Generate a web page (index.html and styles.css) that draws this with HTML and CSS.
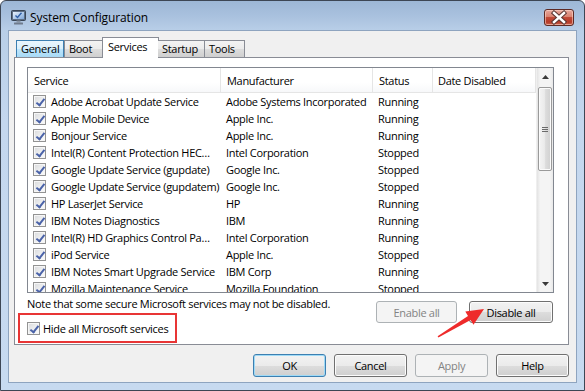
FILE: index.html
```html
<!DOCTYPE html>
<html>
<head>
<meta charset="utf-8">
<link rel="stylesheet" href="styles.css">
</head>
<body>
<div class="window">
  <div class="titlebar">
    <svg class="app-icon" width="15" height="15" viewBox="0 0 15 15">
      <defs>
        <linearGradient id="scr" x1="0" y1="0" x2="1" y2="1">
          <stop offset="0" stop-color="#e8f2fc"/>
          <stop offset="1" stop-color="#7fa7d8"/>
        </linearGradient>
      </defs>
      <rect x="0.5" y="0.5" width="14" height="10" rx="1" fill="#5d6f86" stroke="#3a4656"/>
      <rect x="2" y="2" width="11" height="7" fill="url(#scr)"/>
      <path d="M4.5 5.5 L6.5 7.5 L10.5 2.8" fill="none" stroke="#2f5fa8" stroke-width="1.4"/>
      <rect x="5.5" y="10.5" width="4" height="2" fill="#8a96a6"/>
      <rect x="3" y="12.5" width="9" height="2" rx="0.5" fill="#6f7b8c"/>
    </svg>
    <span class="title">System Configuration</span>
    <div class="close">
      <svg width="30" height="17" viewBox="0 0 30 17">
        <path d="M10 4 L20 13 M20 4 L10 13" stroke="#5a3632" stroke-width="4.4" stroke-linecap="square"/>
        <path d="M10 4 L20 13 M20 4 L10 13" stroke="#ffffff" stroke-width="2.4" stroke-linecap="square"/>
      </svg>
    </div>
  </div>

  <div class="client">
    <div class="tabs">
      <div class="tab tab-general hot">General</div>
      <div class="tab tab-boot">Boot</div>
      <div class="tab tab-services active">Services</div>
      <div class="tab tab-startup">Startup</div>
      <div class="tab tab-tools">Tools</div>
    </div>

    <div class="panel">
      <div class="list">
        <div class="list-main">
          <div class="header">
            <div class="hcell">Service</div>
            <div class="hcell">Manufacturer</div>
            <div class="hcell">Status</div>
            <div class="hcell">Date Disabled</div>
          </div>
          <div class="rows">
            <div class="row"><div class="cell first"><span class="cb"></span>Adobe Acrobat Update Service</div><div class="cell">Adobe Systems Incorporated</div><div class="cell">Running</div><div class="cell"></div></div>
            <div class="row"><div class="cell first"><span class="cb"></span>Apple Mobile Device</div><div class="cell">Apple Inc.</div><div class="cell">Running</div><div class="cell"></div></div>
            <div class="row"><div class="cell first"><span class="cb"></span>Bonjour Service</div><div class="cell">Apple Inc.</div><div class="cell">Running</div><div class="cell"></div></div>
            <div class="row"><div class="cell first"><span class="cb"></span>Intel(R) Content Protection HEC…</div><div class="cell">Intel Corporation</div><div class="cell">Stopped</div><div class="cell"></div></div>
            <div class="row"><div class="cell first"><span class="cb"></span>Google Update Service (gupdate)</div><div class="cell">Google Inc.</div><div class="cell">Stopped</div><div class="cell"></div></div>
            <div class="row"><div class="cell first"><span class="cb"></span>Google Update Service (gupdatem)</div><div class="cell">Google Inc.</div><div class="cell">Stopped</div><div class="cell"></div></div>
            <div class="row"><div class="cell first"><span class="cb"></span>HP LaserJet Service</div><div class="cell">HP</div><div class="cell">Running</div><div class="cell"></div></div>
            <div class="row"><div class="cell first"><span class="cb"></span>IBM Notes Diagnostics</div><div class="cell">IBM</div><div class="cell">Running</div><div class="cell"></div></div>
            <div class="row"><div class="cell first"><span class="cb"></span>Intel(R) HD Graphics Control Pa…</div><div class="cell">Intel Corporation</div><div class="cell">Running</div><div class="cell"></div></div>
            <div class="row"><div class="cell first"><span class="cb"></span>iPod Service</div><div class="cell">Apple Inc.</div><div class="cell">Stopped</div><div class="cell"></div></div>
            <div class="row"><div class="cell first"><span class="cb"></span>IBM Notes Smart Upgrade Service</div><div class="cell">IBM Corp</div><div class="cell">Running</div><div class="cell"></div></div>
            <div class="row"><div class="cell first"><span class="cb"></span>Mozilla Maintenance Service</div><div class="cell">Mozilla Foundation</div><div class="cell">Stopped</div><div class="cell"></div></div>
          </div>
        </div>
        <div class="scrollbar">
          <div class="sb-btn"><svg width="7" height="4" viewBox="0 0 7 4"><path d="M0 4 L3.5 0 L7 4 Z" fill="#3a3a3a"/></svg></div>
          <div class="sb-track">
            <div class="sb-thumb"><span class="grip"></span></div>
          </div>
          <div class="sb-btn"><svg width="7" height="4" viewBox="0 0 7 4"><path d="M0 0 L7 0 L3.5 4 Z" fill="#3a3a3a"/></svg></div>
        </div>
      </div>

      <div class="below">
        <div class="below-left">
          <div class="note">Note that some secure Microsoft services may not be disabled.</div>
          <div class="hide-row"><span class="cb"></span>Hide all Microsoft services</div>
        </div>
        <div class="actions">
          <div class="btn disabled btn-enable">Enable all</div>
          <div class="btn btn-disable">Disable all</div>
        </div>
      </div>
    </div>

    <div class="footer">
      <div class="btn default">OK</div>
      <div class="btn">Cancel</div>
      <div class="btn disabled">Apply</div>
      <div class="btn">Help</div>
    </div>
  </div>

  <svg class="arrow" width="585" height="391" viewBox="0 0 585 391">
    <polygon points="484,309 473.5,324.8 470.6,320.1 438.4,337.6 437.6,336.2 468.0,315.9 465.3,311.6" fill="#ee2b2b"/>
  </svg>
</div>
</body>
</html>
```

FILE: styles.css
```css
* { box-sizing: border-box; }

html, body {
  margin: 0;
  padding: 0;
  background: #ffffff;
}

body {
  font-family: "Open Sans", "Noto Sans", sans-serif;
  font-size: 11px;
  letter-spacing: -0.3px;
  color: #000;
}

.window {
  position: relative;
  width: 585px;
  height: 391px;
  border: 1px solid #3d4654;
  border-radius: 6px 6px 0 0;
  background: linear-gradient(to bottom, #9db7d6 0px, #a9c1de 15px, #b9cfe8 30px, #c4d7ee 120px, #c7daf0 391px);
  padding: 0 7px 7px 7px;
  display: flex;
  flex-direction: column;
  overflow: hidden;
}

.titlebar {
  height: 29px;
  display: flex;
  align-items: center;
  padding-top: 3px;
}

.app-icon {
  margin-left: 3px;
  flex: none;
}

.title {
  margin-left: 4px;
  font-size: 12px;
  letter-spacing: -0.1px;
  color: #000;
  flex: 1;
}

.close {
  width: 30px;
  height: 17px;
  margin-right: 3px;
  border: 1px solid #5e2a24;
  border-radius: 3px;
  background: linear-gradient(to bottom, #e7a79c 0%, #d98270 45%, #c14a38 50%, #b63b29 80%, #c8624c 100%);
  box-shadow: inset 0 0 0 1px rgba(255, 220, 210, 0.55);
  display: flex;
  align-items: center;
  justify-content: center;
  overflow: hidden;
}

.close svg { display: block; margin: -1px; }

.client {
  flex: 1;
  background: #f0f0f0;
  border: 1px solid #8ea4bf;
  padding: 6px 7px 0 5px;
  display: flex;
  flex-direction: column;
}

/* Tabs */
.tabs {
  height: 20px;
  display: flex;
  align-items: flex-end;
  padding-left: 2px;
  position: relative;
  z-index: 2;
}

.tab {
  height: 17px;
  border: 1px solid #898c95;
  border-bottom: none;
  border-right: none;
  background: linear-gradient(to bottom, #f3f3f3 0%, #ebebeb 50%, #dddddd 51%, #cfcfcf 100%);
  padding-left: 4px;
  line-height: 15px;
  white-space: nowrap;
}

.tab-general { width: 48px; }
.tab-boot { width: 40px; border-right: 1px solid #898c95; }
.tab-services { width: 57px; }
.tab-startup { width: 46px; border-left: none; }
.tab-tools { width: 41px; border-right: 1px solid #898c95; }

.tab.hot {
  background: linear-gradient(to bottom, #eaf6fd 0%, #d9f0fc 50%, #bee6fd 51%, #a7d9f5 100%);
  border-color: #3c7fb1;
  border-right: 1px solid #3c7fb1;
}

.tab.active {
  height: 21px;
  margin-bottom: -1px;
  background: #ffffff;
  border: 1px solid #898c95;
  border-bottom: none;
  padding-left: 5px;
  line-height: 17px;
  margin-left: -2px;
  margin-right: -1px;
}

/* Panel */
.panel {
  height: 288px;
  background: #ffffff;
  border: 1px solid #898c95;
  padding: 9px 14px 0 12px;
  display: flex;
  flex-direction: column;
}

.list {
  height: 226px;
  border: 1px solid #828790;
  display: flex;
  overflow: hidden;
}

.list-main {
  flex: 1;
  display: flex;
  flex-direction: column;
  min-width: 0;
}

.header {
  height: 25px;
  display: grid;
  grid-template-columns: 193px 152px 60px 1fr;
  border-bottom: 1px solid #e5e5e5;
  background: linear-gradient(to bottom, #ffffff, #ffffff 60%, #f7f8fa);
}

.hcell {
  border-right: 1px solid #e5e5e5;
  padding-left: 6px;
  line-height: 25px;
  white-space: nowrap;
}

.hcell:last-child { padding-left: 5px; }

.rows {
  flex: 1;
  overflow: hidden;
}

.row {
  height: 17px;
  display: grid;
  grid-template-columns: 193px 152px 60px 1fr;
  align-items: center;
}

.cell {
  padding-left: 5px;
  white-space: nowrap;
  overflow: hidden;
  line-height: 17px;
}

.cell.first {
  padding-left: 5px;
  display: flex;
  align-items: center;
}

/* Checkbox */
.cb {
  position: relative;
  flex: none;
  width: 13px;
  height: 13px;
  border: 1px solid #939393;
  background: linear-gradient(135deg, #d9dadc 0%, #eeeff0 55%, #fbfbfb 100%);
  box-shadow: inset 0 0 0 1px #f6f6f6;
  margin-right: 5px;
}

.cb::after {
  content: "";
  position: absolute;
  left: 4px;
  top: 1px;
  width: 3px;
  height: 7px;
  border-right: 2px solid #4a62a8;
  border-bottom: 2px solid #4a62a8;
  transform: rotate(38deg);
}

/* Scrollbar */
.scrollbar {
  width: 17px;
  flex: none;
  display: flex;
  flex-direction: column;
  background: linear-gradient(to right, #e3e3e3 0%, #f4f4f4 20%, #f4f4f4 80%, #e9e9e9 100%);
  border-left: 1px solid #efefef;
}

.sb-btn {
  height: 17px;
  display: flex;
  align-items: center;
  justify-content: center;
}

.sb-btn svg { display: block; }

.sb-track {
  flex: 1;
  padding-top: 2px;
}

.sb-thumb {
  margin: 0 1px;
  height: 84px;
  border: 1px solid #9a9a9a;
  border-radius: 2px;
  background: linear-gradient(to right, #f4f4f4 0%, #ebebeb 45%, #dcdcdc 55%, #d0d0d0 100%);
  box-shadow: inset 0 0 0 1px #fbfbfb;
  display: flex;
  align-items: center;
  justify-content: center;
}

.grip {
  width: 6px;
  height: 5px;
  border-top: 1px solid #6a6a6a;
  border-bottom: 1px solid #6a6a6a;
  position: relative;
}

.grip::after {
  content: "";
  position: absolute;
  left: 0;
  right: 0;
  top: 1px;
  border-top: 1px solid #6a6a6a;
}

/* Below list */
.below {
  display: flex;
  justify-content: space-between;
  align-items: flex-start;
}

.below-left {
  display: flex;
  flex-direction: column;
}

.note {
  margin-top: 3px;
  line-height: 15px;
  white-space: nowrap;
}

.hide-row {
  margin-top: 2px;
  margin-left: -9px;
  width: 159px;
  height: 30px;
  border: 2px solid #e83535;
  padding-left: 7px;
  display: flex;
  align-items: center;
  white-space: nowrap;
}

.hide-row .cb { margin-right: 3px; }

.actions {
  margin-top: 8px;
  display: flex;
  gap: 12px;
  margin-right: 1px;
}

/* Buttons */
.btn {
  height: 22px;
  border: 1px solid #707070;
  border-radius: 3px;
  background: linear-gradient(to bottom, #f2f2f2 0%, #ebebeb 50%, #dddddd 51%, #cfcfcf 100%);
  box-shadow: inset 0 0 0 1px #fcfcfc;
  display: flex;
  align-items: center;
  justify-content: center;
  white-space: nowrap;
}

.btn.disabled {
  border-color: #adb2b5;
  background: #f4f4f4;
  box-shadow: none;
  color: #838383;
}

.btn.default {
  border-color: #3c7fb1;
  box-shadow: inset 0 0 0 1px #9fdaf6;
}

.btn-enable { width: 81px; }
.btn-disable { width: 84px; }

.footer {
  margin-top: 9px;
  display: flex;
  justify-content: flex-end;
  gap: 8px;
}

.footer .btn {
  width: 73px;
  height: 23px;
}

/* Annotation arrow overlay */
.arrow {
  position: absolute;
  left: -1px;
  top: -1px;
  pointer-events: none;
}
```
